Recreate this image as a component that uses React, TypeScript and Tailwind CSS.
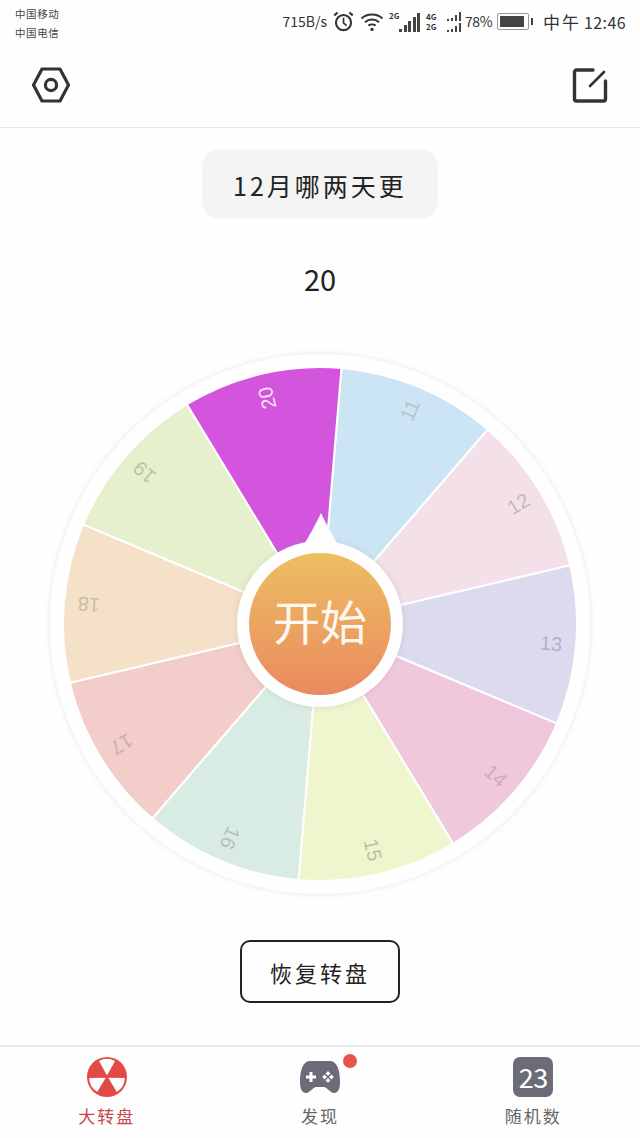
import React from "react";

const FONT = { fontFamily: '"Noto Sans CJK SC", "Noto Sans", sans-serif' };

// Prize slices, clockwise, starting from the slice just past 12 o'clock
const SLICES = [
  { label: "11", fill: "#cce5f5", ink: "#b4c2cc" },
  { label: "12", fill: "#f3e0e8", ink: "#c4bac0" },
  { label: "13", fill: "#dcdaee", ink: "#b4b2c2" },
  { label: "14", fill: "#f0c8dc", ink: "#c8aebb" },
  { label: "15", fill: "#eff5cc", ink: "#bcc0a6" },
  { label: "16", fill: "#d9ece4", ink: "#b2c0ba" },
  { label: "17", fill: "#f3cdc9", ink: "#ccaeaa" },
  { label: "18", fill: "#f5e1c8", ink: "#c8bcab" },
  { label: "19", fill: "#e7f0cd", ink: "#bcc2ac" },
  { label: "20", fill: "#d355dd", ink: "#f8e6fa" },
];

const START = 4.8;
const STEP = 36;
const R = 257;

function polar(r: number, deg: number) {
  const a = (deg * Math.PI) / 180;
  return [r * Math.sin(a), -r * Math.cos(a)];
}

function wedge(r: number, from: number, to: number) {
  const [x1, y1] = polar(r, from);
  const [x2, y2] = polar(r, to);
  return `M0 0L${x1} ${y1}A${r} ${r} 0 0 1 ${x2} ${y2}Z`;
}

function Wheel() {
  return (
    <svg viewBox="-275 -275 550 550" className="absolute inset-0 w-full h-full">
      <defs>
        <filter id="rim" x="-5%" y="-5%" width="110%" height="110%">
          <feGaussianBlur stdDeviation="2.5" />
        </filter>
      </defs>
      <circle r="271" fill="#ececec" filter="url(#rim)" />
      <circle r="270" fill="#fdfefd" />
      {SLICES.map((s, i) => {
        const from = START + i * STEP;
        const mid = from + STEP / 2;
        return (
          <g key={s.label}>
            <path d={wedge(R, from, from + STEP)} fill={s.fill} stroke="#ffffff" strokeWidth="2" />
            {/* Labels run along the radius, so they turn with their slice */}
            <text
              transform={`rotate(${mid}) translate(0 -232) rotate(-90)`}
              textAnchor="middle"
              dominantBaseline="central"
              fontSize="20"
              fontFamily='"Liberation Sans", sans-serif'
              fill={s.ink}
            >
              {s.label}
            </text>
          </g>
        );
      })}
      <circle r="85" fill="#888888" opacity="0.14" filter="url(#rim)" />
      <path d="M1 -111 C6 -100 12 -90 21 -74 L-19 -74 C-10 -90 -4 -100 1 -111Z" fill="#fdfefd" />
    </svg>
  );
}

function Hexagon() {
  return (
    <svg width="38" height="36" viewBox="0 0 38 36" fill="none" stroke="#333" strokeWidth="3.2" strokeLinejoin="round">
      <path d="M10 2H28L36.5 18L28 34H10L1.5 18Z" />
      <circle cx="19" cy="18" r="5.6" />
    </svg>
  );
}

function EditIcon() {
  return (
    <svg width="36" height="36" viewBox="0 0 36 36" fill="none" stroke="#333" strokeWidth="3.4" strokeLinecap="round" strokeLinejoin="round">
      <path d="M21 3H4.5a2 2 0 0 0-2 2v27a2 2 0 0 0 2 2h27a2 2 0 0 0 2-2V14" />
      <path d="M32 5L18 19" strokeWidth="2.6" />
    </svg>
  );
}

function Alarm() {
  return (
    <svg width="21" height="21" viewBox="0 0 20 20" fill="none" stroke="#333" strokeWidth="2">
      <circle cx="10" cy="11" r="7.2" />
      <path d="M10 6.5V11.3L13 14" strokeWidth="1.6" />
      <path d="M1.2 4.2L4.4 1.4M18.8 4.2L15.6 1.4" />
    </svg>
  );
}

function Wifi() {
  return (
    <svg width="24" height="20" viewBox="0 0 24 20" fill="none" stroke="#333" strokeWidth="2">
      <path d="M1.5 6.5C7 1.2 17 1.2 22.5 6.5" />
      <path d="M5 10.2C9 6.6 15 6.6 19 10.2" />
      <path d="M8.4 13.6C10.4 12 13.6 12 15.6 13.6" />
      <circle cx="12" cy="17.4" r="1.7" fill="#333" stroke="none" />
    </svg>
  );
}

function Bars({ heights, w = 3, gap = 2 }: { heights: number[]; w?: number; gap?: number }) {
  return (
    <div className="flex items-end" style={{ gap }}>
      {heights.map((h, i) => (
        <div key={i} className="bg-[#444]" style={{ width: w, height: h }} />
      ))}
    </div>
  );
}

function StatusBar() {
  return (
    <div className="h-[45px] flex justify-between text-[#333]" style={FONT}>
      <div className="pl-[15px] pt-[4px] text-[10.5px] leading-[19px] tracking-[0.6px] text-[#444]">
        <div>中国移动</div>
        <div>中国电信</div>
      </div>
      <div className="pr-[14px] pt-[9px] h-[34px] flex items-center">
        <span className="text-[14px] mr-[6px] text-[#333]">715B/s</span>
        <Alarm />
        <div className="w-[6px]" />
        <Wifi />
        <div className="relative w-[31px] h-[20px] ml-[5px]">
          <span className="absolute left-0 top-[-1px] text-[8px] font-bold leading-[9px]">2G</span>
          <div className="absolute right-0 bottom-0">
            <Bars heights={[3, 7, 11, 15, 19]} w={3} gap={1.5} />
          </div>
        </div>
        <div className="relative w-[35px] h-[20px] ml-[6px]">
          <span className="absolute left-0 top-0 text-[8px] font-bold leading-[9px]">4G</span>
          <span className="absolute left-0 top-[10px] text-[8px] font-bold leading-[9px]">2G</span>
          <div className="absolute right-0 top-0">
            <Bars heights={[2, 3, 6, 9]} w={2.5} gap={1.5} />
          </div>
          <div className="absolute right-0 bottom-0">
            <Bars heights={[2, 3, 6, 9]} w={2.5} gap={1.5} />
          </div>
        </div>
        <span className="text-[14px] ml-[4px] mr-[5px] text-[#333] tracking-[-0.5px]">78%</span>
        <div className="w-[32px] h-[17px] border border-[#999] rounded-[2px] p-[2px]">
          <div className="w-[24px] h-full bg-[#444]" />
        </div>
        <div className="w-[2px] h-[7px] bg-[#444] ml-[2px] mr-[10px]" />
        <span className="text-[17px] tracking-[2px]">中午</span>
        <span className="text-[16px] tracking-[0.4px] ml-[3px]">12:46</span>
      </div>
    </div>
  );
}

function FanIcon() {
  return (
    <svg width="42" height="42" viewBox="-21 -21 42 42">
      <circle r="20" fill="#e24a45" />
      {[0, 120, 240].map((a) => (
        <path key={a} d={wedge(16.5, a - 29, a + 29)} transform={`rotate(${a}) translate(0 -1.5) rotate(${-a})`} fill="#ffffff" />
      ))}
    </svg>
  );
}

function GamepadIcon() {
  return (
    <svg width="42" height="36" viewBox="0 0 42 36">
      <path
        d="M11 2H31C37 2 41 9 41 23C41 30 39 34 35 34C31 34 28 28 25 28H17C14 28 11 34 7 34C3 34 1 30 1 23C1 9 5 2 11 2Z"
        fill="#6c6c78"
      />
      <path d="M12 13V23M7 18H17" stroke="#fff" strokeWidth="3" />
      <path d="M29 12l2.4 2.4l-2.4 2.4l-2.4-2.4Z M29 19l2.4 2.4l-2.4 2.4l-2.4-2.4Z M25.6 15.6l2.4 2.4l-2.4 2.4l-2.4-2.4Z M32.4 15.6l2.4 2.4l-2.4 2.4l-2.4-2.4Z" fill="#fff" />
    </svg>
  );
}

function Tab({ icon, label, color }: { icon: React.ReactNode; label: string; color: string }) {
  return (
    <div className="flex-1 flex flex-col items-center pt-[9px]">
      <div className="h-[42px] flex items-center justify-center">{icon}</div>
      <span className="mt-[6px] text-[17px] leading-[24px] tracking-[2px]" style={{ color }}>
        {label}
      </span>
    </div>
  );
}

export default function App() {
  return (
    <div className="w-[640px] h-[1138px] bg-[#fefefe] flex flex-col overflow-hidden" style={FONT}>
      <StatusBar />
      <header className="h-[83px] px-[32px] flex items-center justify-between border-b border-[#e6e6e6] pb-[2px]">
        <Hexagon />
        <EditIcon />
      </header>

      <main className="flex-1 flex flex-col items-center pt-[21px]">
        <div className="w-[236px] h-[70px] rounded-[18px] bg-[#f4f4f4] flex items-center justify-center pt-[4px] text-[25px] tracking-[3px] text-[#222]">
          12月哪两天更
        </div>
        <div className="mt-[39px] h-[40px] text-[29px] leading-[40px] text-[#222] mb-[3px]">20</div>

        <div className="relative w-[550px] h-[550px] mt-[48px]">
          <Wheel />
          {/* Start button sits on the wheel's hub */}
          <div className="absolute left-[192px] top-[192px] w-[166px] h-[166px] rounded-full bg-[#fdfefd] flex items-center justify-center">
            <button
              type="button"
              className="w-[142px] h-[142px] rounded-full bg-gradient-to-b from-[#edbe62] to-[#e98a5e] pb-[10px] text-[#fff8f0] text-[47px] leading-none"
            >
              开始
            </button>
          </div>
        </div>

        <button
          type="button"
          className="mt-[41px] w-[160px] h-[63px] rounded-[10px] border-2 border-[#222] pt-[2px] text-[22px] tracking-[3px] text-[#222]"
        >
          恢复转盘
        </button>
      </main>

      <nav className="h-[93px] border-t-2 border-[#ececec] flex">
        <Tab icon={<FanIcon />} label="大转盘" color="#c8434a" />
        <div className="flex-1 relative">
          <Tab icon={<GamepadIcon />} label="发现" color="#666" />
          <span className="absolute left-[130px] top-[7px] w-[14px] h-[14px] rounded-full bg-[#e8544a]" />
        </div>
        <Tab
          icon={
            <span className="w-[40px] h-[40px] rounded-[7px] bg-[#6c6c78] text-white text-[27px] leading-[40px] text-center tracking-[-0.5px]">
              23
            </span>
          }
          label="随机数"
          color="#666"
        />
      </nav>
    </div>
  );
}
